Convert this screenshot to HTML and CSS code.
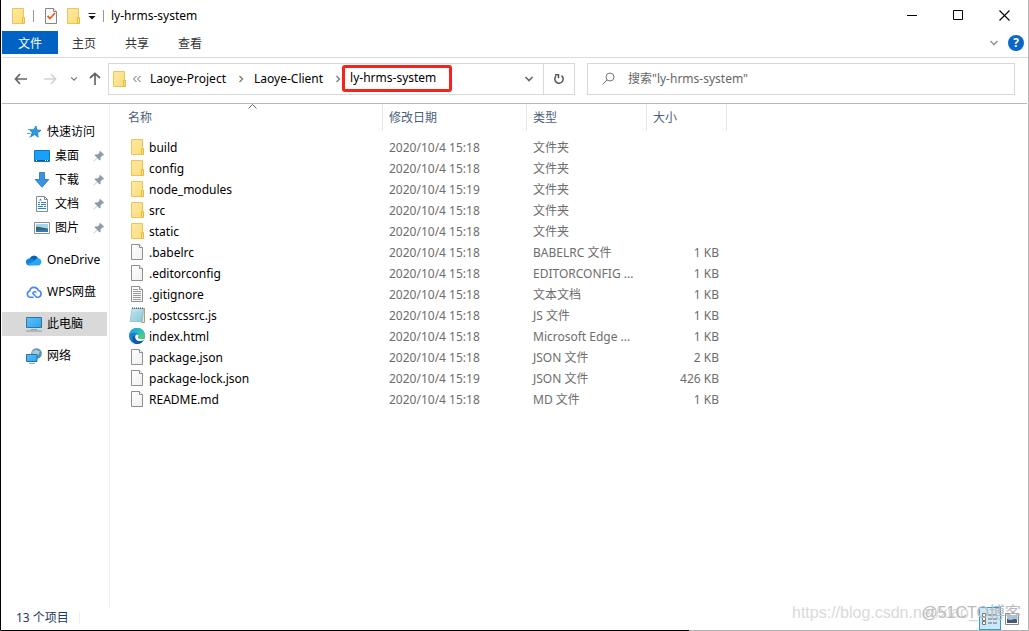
FILE: index.html
```html
<!DOCTYPE html>
<html lang="zh-CN">
<head>
<meta charset="utf-8">
<title>ly-hrms-system</title>
<link rel="stylesheet" href="styles.css">
</head>
<body>
<svg class="defs" aria-hidden="true">
  <defs>
    <linearGradient id="gold" x1="0" y1="0" x2="1" y2="1"><stop offset="0" stop-color="#ffe9a2"/><stop offset="1" stop-color="#fbdc7c"/></linearGradient>
    <linearGradient id="screen" x1="0" y1="0" x2="1" y2="1"><stop offset="0" stop-color="#5cc0fb"/><stop offset="1" stop-color="#2ea3f2"/></linearGradient>
    <linearGradient id="edge-green" x1="0" y1="0" x2="1" y2="1"><stop offset="0" stop-color="#1c9de0"/><stop offset=".5" stop-color="#2cc0c0"/><stop offset="1" stop-color="#62d84e"/></linearGradient>
    <linearGradient id="paper" x1="0" y1="0" x2="1" y2="1"><stop offset="0" stop-color="#fff"/><stop offset="1" stop-color="#eef0f1"/></linearGradient>
    <linearGradient id="pad" x1="0" y1="0" x2="1" y2="1"><stop offset="0" stop-color="#d3edf2"/><stop offset="1" stop-color="#7fc3d6"/></linearGradient>
    <symbol id="folder" viewBox="0 0 16 16"><path d="M2.500.5h11v15h-11z" fill="url(#gold)" stroke="#ebc55c"/><path d="M12.500 9.500h2v6h-2z" fill="#fbe08b" stroke="#e6b93f"/></symbol>
    <symbol id="file" viewBox="0 0 16 16"><path d="M2.500.5h8l3 3v12h-11z" fill="url(#paper)" stroke="#8f8f8f"/><path d="M10.500.5v3h3" fill="#fff" stroke="#8f8f8f"/></symbol>
    <symbol id="text" viewBox="0 0 16 16"><path d="M2.500.5h8l3 3v12h-11z" fill="#fafafa" stroke="#8f8f8f"/><path d="M10.500.5v3h3" fill="#fff" stroke="#8f8f8f"/><path d="M4 3.500h5M4 5.500h8M4 7.500h8M4 9.500h8M4 11.500h8M4 13.500h8" stroke="#9b9b9b"/></symbol>
    <symbol id="note" viewBox="0 0 16 16"><path d="M13.500 1.500h2v14h-3z" fill="#efe6c8" stroke="#9b8a58" stroke-width=".8"/><path d="M3 1.500h12l-2 13H1z" fill="url(#pad)" stroke="#7fb4c2" stroke-width=".6"/><path d="M2.800 5.500H13M2.500 8H12.700M2.200 10.500H12.300" stroke="#9fd0dc" stroke-width=".6"/><path d="M3 1.200h12" stroke="#4f6268" stroke-width="1.600" stroke-dasharray="1 1"/></symbol>
    <symbol id="edge" viewBox="0 0 16 16"><circle cx="8" cy="8" r="8" fill="#1a7fd0"/><path d="M.3 6C1.500 2 4.600 0 8 0c5 0 8 3.500 8 7 0 2.600-2 4-4 4-1.600 0-2.800-.6-2.800-1.300 0-.5.7-.8.7-1.900C9.900 6 8 4.600 5.600 4.600 3 4.600 1.200 5.400.3 6z" fill="url(#edge-green)"/><path d="M6.500 7.500C5.500 8.300 5.600 10 6.600 11.400c1.500 2 4.500 2.500 7.900.9C13.500 14.500 11 16 8 16 4 15.500 3 12 3.600 9.500 4 8 5.200 7.300 6.500 7.500z" fill="#1458a8"/><path d="M6.300 8C7 6.300 8.800 6.200 9.500 7.300c.5.9-.4 1.500-.4 2.300 0 1.200 2 1.800 4.500 1.400 1-.2 1.600-.5 2-.8-.2.900-.6 1.600-1.100 2.100-3 1.500-6 .7-7.300-.9-.8-1-1.200-2.400-.9-3.400z" fill="#fff"/></symbol>
    <symbol id="pin" viewBox="0 0 12 12"><path d="M7 .8 11.200 5l-1.200.6-.5-.2-2 2 .2 2.200-.9.9-2.500-2.600L.8 11.500.500 11.200 4.100 7.700 1.500 5.200l.9-.9 2.200.2 2-2-.2-.5z" fill="#8d99a3"/></symbol>
    <symbol id="star" viewBox="0 0 16 16"><path d="M10 2l.8 4 4.200.4-3.500 2.400.7 4.400-3.500-2.700-4 2.300 1.500-4.200-2.700-2.900 4.100.1z" fill="#2d9be6" stroke="#1677bd" stroke-width=".8"/><path d="M2 5.500h3M1 9.500h3.500M3 13.500l2-1.500" stroke="#4caeea"/></symbol>
    <symbol id="desktop" viewBox="0 0 16 16"><path d="M.5 2.500h15v11H.5z" fill="#18a0fb" stroke="#0d76c5"/><path d="M1 12.500h14" stroke="#10588f"/><path d="M2 12.500h1M11 12.500h1M13 12.500h1" stroke="#fff"/></symbol>
    <symbol id="down" viewBox="0 0 16 16"><path d="M5.500.5h5v7h4.300L8 15.300 1.200 7.500h4.300z" fill="#3992e2" stroke="#1e72bd" stroke-width=".8"/></symbol>
    <symbol id="docs" viewBox="0 0 16 16"><path d="M2.500.5h8l3 3v12h-11z" fill="#fff" stroke="#858b90"/><path d="M10.500.5v3h3" fill="none" stroke="#858b90"/><path d="M4 6.500h2M4 8.500h2M7 6.500h5M7 8.500h5M4 10.500h5M10 10.500h2M4 12.500h8" stroke="#2685c8"/><path d="M5 4.500l1.500-2L8 4.500z" fill="#2685c8"/></symbol>
    <symbol id="pics" viewBox="0 0 16 16"><path d="M.5 2.500h15v11H.5z" fill="#fff" stroke="#8c9196"/><path d="M2 4h12v8H2z" fill="#a5d3f2"/><path d="M2 7c3-1 6 1 12 1.500v2H2z" fill="#3b6864"/><path d="M2 10l12-.5V12H2z" fill="#3278b8"/></symbol>
    <symbol id="onedrive" viewBox="0 0 16 16"><path d="M3.500 7a4.700 4.700 0 0 1 8.700-.8L9 10z" fill="#0863b6"/><path d="M3.500 6.500c2-.4 3 .3 8.500 4L3.500 13.500A3.500 3.500 0 0 1 3.500 6.500z" fill="#1283d9"/><path d="M8 9.200c1.200-2 2.600-3.200 4.500-3A3.800 3.800 0 0 1 12.700 13.500H3.500L1.500 12z" fill="#27a7ec"/></symbol>
    <symbol id="wps" viewBox="0 0 16 16"><path d="M7 13.200H4A3.200 3.200 0 0 1 3.600 7 4.500 4.500 0 0 1 12.300 6.500a3.400 3.400 0 0 1 0 6.700H10.500L6.800 9.500A2 2 0 0 1 9.800 8" fill="none" stroke="#4888f5" stroke-width="1.600" stroke-linecap="round" stroke-linejoin="round"/></symbol>
    <symbol id="pc" viewBox="0 0 16 16"><path d="M.5 1.500h15v10H.5z" fill="url(#screen)" stroke="#39758f"/><path d="M5 13.500h6" stroke="#8ca2ae"/><path d="M0 15h16" stroke="#7f98a6"/></symbol>
    <symbol id="net" viewBox="0 0 16 16"><circle cx="10.500" cy="5.500" r="5.300" fill="#598fae"/><path d="M6 3.500l4-2 4 2-2 4H7z" fill="#a2cddd"/><path d="M.5 6.500h10.500v7H.5z" fill="url(#screen)" stroke="#28749e"/><path d="M3 15.300h6" stroke="#809aa8"/></symbol>
    <symbol id="chev" viewBox="0 0 6 8"><path d="M1.500 1l3 3-3 3" fill="none" stroke="#777" stroke-width="1.300"/></symbol>
    <symbol id="drop" viewBox="0 0 10 10"><path d="M1.500 3l3.500 3.500L8.500 3" fill="none" stroke="currentColor" stroke-width="1.600"/></symbol>
  </defs>
</svg>
<div class="window">
  <header class="titlebar">
    <svg class="icon"><use href="#folder"/></svg>
    <span class="rule"></span>
    <button class="quick" aria-label="属性"><svg class="icon" viewBox="0 0 16 16"><path d="M2.500.5h8l3 3v12h-11z" fill="#fafafa" stroke="#858585"/><path d="M10.500.5v3h3" fill="#fff" stroke="#858585"/><path d="M4.500 8l2.500 2.500L12 5" fill="none" stroke="#e65b26" stroke-width="1.800"/></svg></button>
    <button class="quick" aria-label="新建文件夹"><svg class="icon"><use href="#folder"/></svg></button>
    <button class="more" aria-label="自定义快速访问工具栏"><svg width="8" height="8" viewBox="0 0 8 8"><path d="M.5 1.500h7" stroke="#222"/><path d="M.5 4h7L4 7.500z" fill="#111"/></svg></button>
    <span class="rule"></span>
    <h1 class="title">ly-hrms-system</h1>
    <div class="controls">
      <button aria-label="最小化"><svg width="11" height="11"><path d="M0 5.500h10" stroke="#000"/></svg></button>
      <button aria-label="最大化"><svg width="11" height="11"><path d="M.5.5h9v9h-9z" fill="none" stroke="#000"/></svg></button>
      <button aria-label="关闭"><svg width="11" height="11"><path d="M.5.5l10 10M10.500.5l-10 10" stroke="#000" stroke-width="1.100"/></svg></button>
    </div>
  </header>
  <nav class="ribbon">
    <button class="tab file-tab">文件</button>
    <button class="tab">主页</button>
    <button class="tab">共享</button>
    <button class="tab">查看</button>
    <button class="expand" aria-label="展开功能区"><svg width="10" height="10"><use href="#drop"/></svg></button>
    <button class="help" aria-label="帮助">?</button>
  </nav>
  <div class="navrow">
    <button class="nav back" aria-label="后退"><svg width="13" height="12" viewBox="0 0 13 12"><path d="M6 1L1.500 6 6 11M1.500 6H13" fill="none" stroke="#666" stroke-width="1.700"/></svg></button>
    <button class="nav fwd" aria-label="前进"><svg width="13" height="12" viewBox="0 0 13 12"><path d="M7 1l4.500 5L7 11M11.500 6H0" fill="none" stroke="#d2d2d2" stroke-width="1.700"/></svg></button>
    <button class="nav recent" aria-label="最近浏览的位置"><svg width="8" height="8"><use href="#drop"/></svg></button>
    <button class="nav up" aria-label="上移"><svg width="12" height="13" viewBox="0 0 12 13"><path d="M1 6l5-4.500L11 6M6 1.500V13" fill="none" stroke="#666" stroke-width="1.700"/></svg></button>
    <div class="address">
      <svg class="icon"><use href="#folder"/></svg>
      <svg class="laquo" width="8" height="8" viewBox="0 0 8 8"><path d="M3.500 1l-3 3 3 3M7.500 1l-3 3 3 3" fill="none" stroke="#666"/></svg>
      <a href="#project">Laoye-Project</a><svg class="chev"><use href="#chev"/></svg>
      <a href="#client">Laoye-Client</a><svg class="chev"><use href="#chev"/></svg>
      <a href="#system" class="marked">ly-hrms-system</a>
      <button class="history" aria-label="以前的位置"><svg width="10" height="10"><use href="#drop"/></svg></button>
      <button class="refresh" aria-label="刷新"><svg width="12" height="12" viewBox="0 0 12 12"><path d="M8.500 2.600A4.200 4.200 0 1 1 3 3M2 1.700h3.500v3.500" fill="none" stroke="#555" stroke-width="1.500"/></svg></button>
    </div>
    <label class="search">
      <svg width="13" height="13" viewBox="0 0 13 13"><circle cx="8" cy="5" r="4" fill="none" stroke="#777"/><path d="M5 8L.5 12.500" stroke="#777"/></svg>
      <input type="text" aria-label="搜索" placeholder='搜索"ly-hrms-system"'>
    </label>
  </div>
  <div class="body">
    <aside class="side">
      <a href="#quick" class="place"><svg class="icon"><use href="#star"/></svg>快速访问</a>
      <a href="#desktop" class="place sub"><svg class="icon"><use href="#desktop"/></svg>桌面<svg class="pin"><use href="#pin"/></svg></a>
      <a href="#downloads" class="place sub"><svg class="icon"><use href="#down"/></svg>下载<svg class="pin"><use href="#pin"/></svg></a>
      <a href="#documents" class="place sub"><svg class="icon"><use href="#docs"/></svg>文档<svg class="pin"><use href="#pin"/></svg></a>
      <a href="#pictures" class="place sub"><svg class="icon"><use href="#pics"/></svg>图片<svg class="pin"><use href="#pin"/></svg></a>
      <a href="#onedrive" class="place group"><svg class="icon"><use href="#onedrive"/></svg>OneDrive</a>
      <a href="#wps" class="place group"><svg class="icon"><use href="#wps"/></svg>WPS网盘</a>
      <a href="#pc" class="place group selected"><svg class="icon"><use href="#pc"/></svg>此电脑</a>
      <a href="#network" class="place group"><svg class="icon"><use href="#net"/></svg>网络</a>
    </aside>
    <main class="content">
      <table class="files">
        <colgroup><col class="c-name"><col class="c-date"><col class="c-type"><col class="c-size"></colgroup>
        <thead><tr><th>名称<svg class="sort" width="9" height="5"><path d="M.5 4.500l4-4 4 4" fill="none" stroke="#666"/></svg></th><th>修改日期</th><th>类型</th><th>大小</th></tr></thead>
        <tbody>
          <tr><td><svg class="icon"><use href="#folder"/></svg>build</td><td>2020/10/4 15:18</td><td>文件夹</td><td></td></tr>
          <tr><td><svg class="icon"><use href="#folder"/></svg>config</td><td>2020/10/4 15:18</td><td>文件夹</td><td></td></tr>
          <tr><td><svg class="icon"><use href="#folder"/></svg>node_modules</td><td>2020/10/4 15:19</td><td>文件夹</td><td></td></tr>
          <tr><td><svg class="icon"><use href="#folder"/></svg>src</td><td>2020/10/4 15:18</td><td>文件夹</td><td></td></tr>
          <tr><td><svg class="icon"><use href="#folder"/></svg>static</td><td>2020/10/4 15:18</td><td>文件夹</td><td></td></tr>
          <tr><td><svg class="icon"><use href="#file"/></svg>.babelrc</td><td>2020/10/4 15:18</td><td>BABELRC 文件</td><td>1 KB</td></tr>
          <tr><td><svg class="icon"><use href="#file"/></svg>.editorconfig</td><td>2020/10/4 15:18</td><td>EDITORCONFIG ...</td><td>1 KB</td></tr>
          <tr><td><svg class="icon"><use href="#text"/></svg>.gitignore</td><td>2020/10/4 15:18</td><td>文本文档</td><td>1 KB</td></tr>
          <tr><td><svg class="icon"><use href="#note"/></svg>.postcssrc.js</td><td>2020/10/4 15:18</td><td>JS 文件</td><td>1 KB</td></tr>
          <tr><td><svg class="icon"><use href="#edge"/></svg>index.html</td><td>2020/10/4 15:18</td><td>Microsoft Edge ...</td><td>1 KB</td></tr>
          <tr><td><svg class="icon"><use href="#file"/></svg>package.json</td><td>2020/10/4 15:18</td><td>JSON 文件</td><td>2 KB</td></tr>
          <tr><td><svg class="icon"><use href="#file"/></svg>package-lock.json</td><td>2020/10/4 15:19</td><td>JSON 文件</td><td>426 KB</td></tr>
          <tr><td><svg class="icon"><use href="#file"/></svg>README.md</td><td>2020/10/4 15:18</td><td>MD 文件</td><td>1 KB</td></tr>
        </tbody>
      </table>
    </main>
  </div>
  <footer class="status">
    <span class="count">13 个项目</span>
    <button class="view active" aria-label="详细信息"><svg width="16" height="16" viewBox="0 0 16 16"><path d="M.5 2.500h3v3h-3zM.5 6.500h3v3h-3zM.5 10.500h3v3h-3z" fill="#fff" stroke="#777"/><path d="M6 4h4M11 4h4M6 8h4M11 8h4M6 12h4M11 12h4" stroke="#666"/></svg></button>
    <button class="view" aria-label="大图标"><svg width="14" height="12" viewBox="0 0 14 12"><path d="M.5.5h13v11H.5z" fill="#fff" stroke="#888"/><path d="M2 2h10v8H2z" fill="#9ec8eb"/><path d="M2 6l4 1 6-2v5H2z" fill="#44597a"/></svg></button>
  </footer>
  <div class="watermark url">https://blog.csdn.net/xiao_</div>
  <div class="watermark brand">@51CTO博客</div>
</div>
</body>
</html>
```
FILE: styles.css
```css
* { box-sizing: border-box; }
body { margin: 0; font: 12px/20px "Noto Sans", "Noto Sans CJK SC", sans-serif; color: #000; background: #fff; }
button { border: 0; padding: 0; margin: 0; background: none; font: inherit; color: inherit; display: flex; align-items: center; justify-content: center; }
a { color: inherit; text-decoration: none; }
svg { display: block; flex: none; }
.defs { position: absolute; width: 0; height: 0; }
.icon { width: 16px; height: 16px; }
.window { position: relative; display: flex; flex-direction: column; min-height: 100vh; border: 1px solid #000; border-top: 0; border-right-color: #b5b5b5; border-bottom-color: #b0b0b0; padding-left: 1px; }
.window::after { content: ""; position: absolute; left: 0; bottom: -1px; width: 67%; height: 1px; background: #000; }
.titlebar { display: flex; align-items: center; height: 31px; padding: 0 1px 0 8px; }
.rule { width: 1px; height: 12px; margin: 0 9px 0 7px; background: #999; }
.quick { margin-right: 6px; }
.more + .rule { margin-right: 7px; }
.more { margin-left: 1px; }
.title { margin: 0; font-size: 12px; font-weight: 400; }
.controls { display: flex; margin-left: auto; }
.controls button { width: 46px; height: 30px; }
.ribbon { display: flex; align-items: center; height: 27px; padding: 0 4px 3px 0; border-bottom: 1px solid #dadbdc; color: #333; }
.tab { width: 53px; height: 23px; padding: 2px 1px 0 0; }
.file-tab { width: 56px; padding-right: 0; background: #0063c4; color: #fff; }
.expand { margin-left: auto; color: #999; }
.help { width: 16px; height: 16px; margin-left: 9px; border-radius: 50%; background: #0a67c8; color: #fff; font-weight: 700; }
.navrow { display: flex; align-items: center; height: 46px; margin-right: 1px; padding: 0 12px 4px 12px; border-bottom: 1px solid #b9b9b9; }
.fwd { margin-left: 17px; }
.recent { margin-left: 13px; color: #777; }
.up { margin: 0 7px 0 11px; }
.address { display: flex; align-items: center; flex: 463 1 0; height: 32px; padding-left: 2px; border: 1px solid #d9d9d9; }
.laquo { margin: 0 9px 0 6px; }
.chev { width: 6px; height: 8px; margin: 0 10px 0 12px; }
.marked { height: 27px; margin-left: -9px; padding: 0 13px 0 5px; border: 3px solid #f8221b; border-radius: 3px; line-height: 20px; }
.history { margin-left: auto; margin-right: 9px; color: #666; }
.refresh { width: 31px; height: 30px; border-left: 1px solid #d9d9d9; }
.search { display: flex; align-items: center; flex: 412 1 0; height: 32px; margin-left: 12px; padding-left: 14px; border: 1px solid #d9d9d9; }
.search input { flex: 1; min-width: 0; margin-left: 13px; padding: 0; border: 0; outline: 0; background: none; font: inherit; }
.search input::placeholder { color: #666; opacity: 1; }
.body { display: flex; flex: 1; }
.side { width: 108px; padding: 16px 2px 0 0; border-right: 1px solid #f0f0f0; }
.place { display: flex; align-items: center; gap: 5px; height: 24px; padding-left: 24px; white-space: nowrap; }
.sub { padding-left: 32px; }
.group { margin-top: 8px; }
.selected { background: #d9d9d9; }
.pin { width: 12px; height: 12px; margin: 0 2px 0 auto; }
.content { flex: 1; min-width: 0; }
.files { width: 617px; table-layout: fixed; border-collapse: separate; border-spacing: 0; }
.c-name { width: 272px; } .c-date { width: 144px; } .c-type { width: 120px; } .c-size { width: 81px; }
th { position: relative; height: 27px; padding: 0 0 0 6px; border-left: 1px solid #e5e5e5; text-align: left; font-weight: 400; color: #4c607a; }
th:first-child { padding-left: 18px; border-left: 0; }
th:last-child { border-right: 1px solid #e5e5e5; }
.sort { position: absolute; top: 0; left: 138px; }
td { height: 21px; padding: 0 0 0 7px; color: #6d6d6d; white-space: nowrap; line-height: 20px; }
td:first-child { display: flex; align-items: center; gap: 4px; padding-left: 19px; color: #000; }
td .icon { margin-bottom: 1px; }
td:last-child { padding-right: 8px; text-align: right; }
tbody::before { content: ""; display: table-row; height: 6px; }
.status { display: flex; align-items: center; height: 23px; padding: 0 5px 0 14px; }
.count { margin: 0 auto 2px 0; padding-right: 10px; border-right: 1px solid #eee; line-height: 12px; color: #1e395b; }
.view { width: 22px; height: 23px; }
.view.active { border: 1px solid #26a0da; background: #cce8f6; }
.watermark { position: absolute; right: 7px; bottom: 6px; font: 16px/22px "Liberation Sans", "Noto Sans CJK SC", sans-serif; color: #bbb; pointer-events: none; white-space: nowrap; }
.url { left: 791px; color: #d9d9d9; }
```
